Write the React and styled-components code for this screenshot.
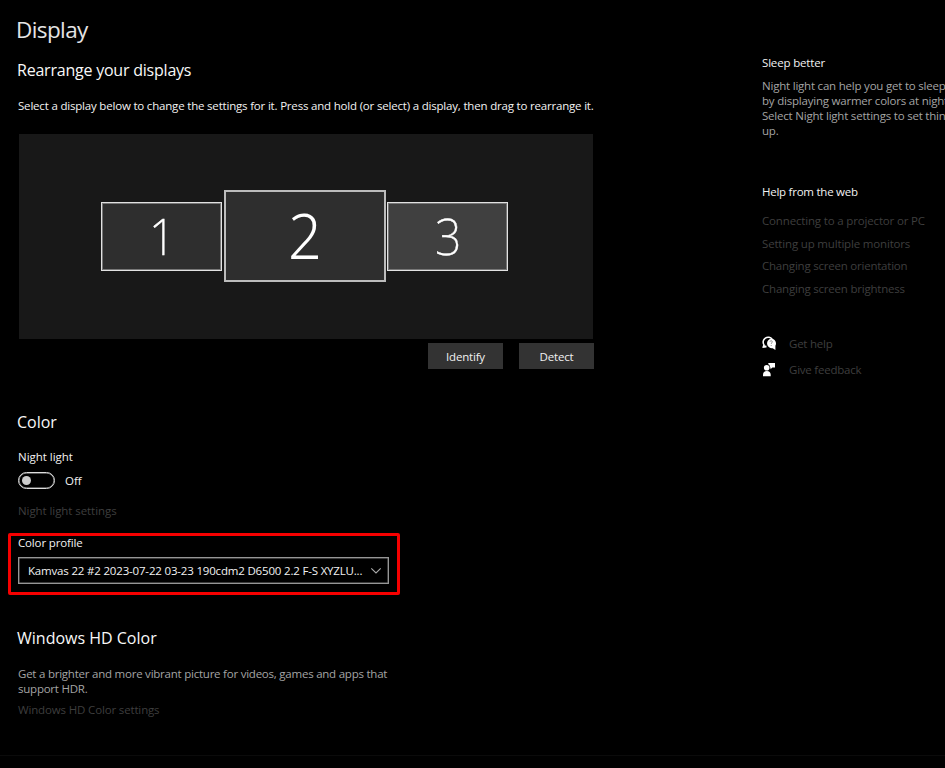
import React from "react";
import styled, { createGlobalStyle } from "styled-components";

const GlobalStyle = createGlobalStyle`
  * { box-sizing: border-box; }
  html, body { margin: 0; background: #000; overflow: hidden; }
  body { font-family: "Open Sans", "Noto Sans", sans-serif; color: #f2f2f2; }
`;

const Page = styled.div`
  width: 945px;
  height: 768px;
  display: flex;
  flex-direction: column;
  overflow: hidden;
  background: #000;
`;

const Content = styled.div`
  height: 755px;
  display: grid;
  grid-template-columns: 762px 183px;
`;

const Footer = styled.footer`
  flex: 1;
  border-top: 1px solid #0b0b0b;
  background: #010101;
`;

const Main = styled.main`
  display: flex;
  flex-direction: column;
  padding: 13px 0 0 18px;
`;

const PageTitle = styled.h1`
  margin: 0 0 0 -2px;
  font-size: 22.5px;
  font-weight: 400;
  line-height: 34px;
  letter-spacing: -0.6px;
  color: #e4e4e4;
`;

const SectionTitle = styled.h2`
  margin: ${(p) => p.$top}px 0 0 -1px;
  font-size: 16px;
  font-weight: 400;
  line-height: 22px;
  letter-spacing: ${(p) => p.$track || 0}px;
  color: #f8f8f8;
`;

const tones = { bright: "#f2f2f2", normal: "#a4a4a4", dim: "#3e3e3e" };

const Text = styled.p`
  margin: ${(p) => p.$top || 0}px 0 0;
  font-size: 11.5px;
  line-height: ${(p) => p.$line || 16}px;
  letter-spacing: ${(p) => p.$track ?? -0.2}px;
  white-space: nowrap;
  color: ${(p) => tones[p.$tone || "bright"]};
`;

const TextLink = styled(Text).attrs({ as: "a", $tone: "dim" })`
  display: block;
`;

const Arrangement = styled.div`
  width: 574px;
  height: 205px;
  margin: 20px 0 0 1px;
  padding-right: 3px;
  display: flex;
  align-items: center;
  justify-content: center;
  gap: 1.5px;
  background: #181818;
`;

const Monitor = styled.div`
  width: ${(p) => (p.$active ? 162 : 121)}px;
  height: ${(p) => (p.$active ? 92 : 69)}px;
  margin-bottom: ${(p) => (p.$active ? 1 : 0)}px;
  display: flex;
  align-items: center;
  justify-content: center;
  border: ${(p) => (p.$active ? "2px solid #bcbcbc" : "1.5px solid #e2e2e2")};
  outline: ${(p) => (p.$active ? "none" : "1px solid #777")};
  outline-offset: -2px;
  background: ${(p) => (p.$light ? "#404040" : "#2e2e2e")};
`;

const MonitorNumber = styled.span`
  padding-bottom: ${(p) => (p.$active ? 4 : 0)}px;
  padding-left: ${(p) => (p.$active ? 0 : 1)}px;
  font-family: "Noto Sans", "Open Sans", sans-serif;
  font-weight: ${(p) => (p.$active ? 300 : 200)};
  font-size: ${(p) => (p.$active ? 63 : 50.5)}px;
  line-height: 1;
  color: #fff;
  -webkit-text-stroke: ${(p) => (p.$active ? 0 : 0.4)}px #fff;
  transform: scaleX(${(p) => (p.$active ? 0.94 : 0.92)});
`;

const Actions = styled.div`
  width: 576px;
  margin-top: 4px;
  display: flex;
  justify-content: flex-end;
  gap: 16px;
`;

const Button = styled.button`
  width: 75px;
  height: 26px;
  padding: 1px 0 0;
  border: 0;
  background: #333;
  color: #f0f0f0;
  font: 11.5px/25px "Open Sans", sans-serif;
  letter-spacing: -0.2px;
`;

const ToggleRow = styled.div`
  display: flex;
  align-items: center;
  gap: 10px;
  margin-top: 7px;
`;

const ToggleLabel = styled.span`
  padding-top: 1px;
  font-size: 11.5px;
  line-height: 16px;
  letter-spacing: -0.05px;
`;

const Toggle = styled.div`
  width: 37px;
  height: 17px;
  padding-left: 3px;
  display: flex;
  align-items: center;
  border: 1.5px solid #dedede;
  border-radius: 9px;
  box-shadow: inset 0 0 0 0.5px #aaa;
`;

const Knob = styled.span`
  width: 9px;
  height: 9px;
  border-radius: 50%;
  background: #ccc;
`;

const Highlight = styled.div`
  width: 392px;
  height: 62px;
  margin: 14px 0 0 -10px;
  padding: 0 7px;
  border: 3px solid #f60000;
  border-radius: 2px;
`;

const Select = styled.div`
  width: 371px;
  height: 27px;
  margin-top: 6px;
  padding: 0 6px 0 9px;
  display: flex;
  align-items: center;
  justify-content: space-between;
  border: 1.5px solid #969696;
  box-shadow: inset 0 0 0 0.5px #777;
`;

const Aside = styled.aside`
  display: flex;
  flex-direction: column;
  padding-top: 55px;
  overflow: hidden;
`;

const LinkList = styled.nav`
  margin-top: 13px;
  display: flex;
  flex-direction: column;
  gap: 6.4px;
`;

const SupportList = styled.div`
  margin-top: 39px;
  display: flex;
  flex-direction: column;
  gap: 10px;
`;

const SupportRow = styled.div`
  height: 16px;
  display: grid;
  grid-template-columns: 27px 1fr;
  align-items: center;
`;

const HelpIcon = () => (
  <svg width="15" height="15" viewBox="0 0 15 15">
    <path d="M1.5 11.2 2 8.9A4.9 4.9 0 1 1 10.2 3.4" fill="none" stroke="#fff" strokeWidth="1.5" />
    <path d="M0.3 12l.8-3 3.4.8v1.7z" fill="#fff" />
    <path d="M9.2 2.6a4.8 4.8 0 0 1 4.2 7.1v4.2l-2.7-1.7A4.8 4.8 0 1 1 9.2 2.6z" fill="#fff" />
    <path d="M7.9 5.8c.2-1.5 2.6-1.3 2.4.1-.1.9-1.1 1-1.1 2M9.2 9v1" fill="none" stroke="#777" strokeWidth="0.8" />
  </svg>
);

const FeedbackIcon = () => (
  <svg width="15" height="15" viewBox="0 0 15 15">
    <circle cx="4.7" cy="5.8" r="2.8" fill="#fff" />
    <path d="M1 14.3v-1.5c0-2.6 1.4-3.9 3.8-3.9s3.9 1.3 3.9 3.9v1.5z" fill="#fff" />
    <path d="M6.3 1H13v4.5h-2.6L8.5 7.2V5.5H8C8.1 3.8 7.6 2.8 6.3 2.2z" fill="#fff" />
  </svg>
);

const Chevron = () => (
  <svg width="12" height="8" viewBox="0 0 12 8">
    <path d="M1.3 1.3 6 6l4.7-4.7" fill="none" stroke="#aaa" strokeWidth="1.1" />
  </svg>
);

const helpLinks = [
  ["Connecting to a projector or PC", -0.16],
  ["Setting up multiple monitors", -0.17],
  ["Changing screen orientation", -0.22],
  ["Changing screen brightness", -0.21],
];

export default function App() {
  return (
    <Page>
      <GlobalStyle />
      <Content>
        <Main>
          <PageTitle>Display</PageTitle>
          <SectionTitle $top={12} $track={-0.22}>Rearrange your displays</SectionTitle>
          <Text $top={17} $track={-0.19}>
            Select a display below to change the settings for it. Press and hold (or select) a display, then drag to rearrange it.
          </Text>
          <Arrangement>
            <Monitor><MonitorNumber>1</MonitorNumber></Monitor>
            <Monitor $active><MonitorNumber $active>2</MonitorNumber></Monitor>
            <Monitor $light><MonitorNumber>3</MonitorNumber></Monitor>
          </Arrangement>
          <Actions>
            <Button>Identify</Button>
            <Button>Detect</Button>
          </Actions>

          <SectionTitle $top={42}>Color</SectionTitle>
          <Text $top={16} $track={-0.02}>Night light</Text>
          <ToggleRow>
            <Toggle><Knob /></Toggle>
            <ToggleLabel>Off</ToggleLabel>
          </ToggleRow>
          <TextLink $top={14} $track={-0.07}>Night light settings</TextLink>

          <Highlight>
            <Text $top={-1} $track={-0.15}>Color profile</Text>
            <Select>
              <Text $track={-0.18}>Kamvas 22 #2 2023-07-22 03-23 190cdm2 D6500 2.2 F-S XYZLU...</Text>
              <Chevron />
            </Select>
          </Highlight>

          <SectionTitle $top={32}>Windows HD Color</SectionTitle>
          <Text $top={17} $line={15} $track={-0.23} $tone="normal">
            Get a brighter and more vibrant picture for videos, games and apps that
            <br />
            support HDR.
          </Text>
          <TextLink $top={6} $track={-0.15}>Windows HD Color settings</TextLink>
        </Main>

        <Aside>
          <Text $track={-0.17}>Sleep better</Text>
          <Text $top={7} $line={15.1} $track={-0.21} $tone="normal">
            Night light can help you get to sleep
            <br />
            by displaying warmer colors at night.
            <br />
            Select Night light settings to set things
            <br />
            up.
          </Text>
          <Text $top={46} $track={-0.25}>Help from the web</Text>
          <LinkList>
            {helpLinks.map(([label, track]) => (
              <TextLink key={label} $track={track}>{label}</TextLink>
            ))}
          </LinkList>
          <SupportList>
            <SupportRow><HelpIcon /><TextLink $track={-0.23}>Get help</TextLink></SupportRow>
            <SupportRow><FeedbackIcon /><TextLink $track={-0.22}>Give feedback</TextLink></SupportRow>
          </SupportList>
        </Aside>
      </Content>
      <Footer />
    </Page>
  );
}
